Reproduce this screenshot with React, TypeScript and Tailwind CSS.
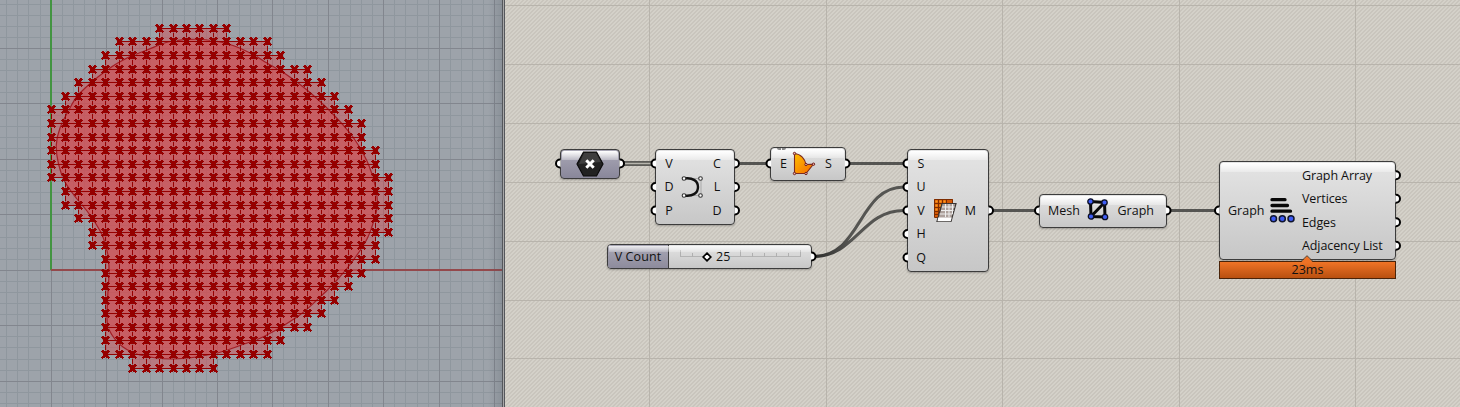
import React from "react";

type Point = [number, number];

const STEP_X = 13.48;
const STEP_Y = 13.59;
const ORIGIN: Point = [51.7, 28.4];

/* First and last occupied column of every mesh row. */
const ROWS: Point[] = [
  [8, 13], [5, 16], [4, 17], [3, 19], [2, 20], [1, 21], [0, 22], [0, 23], [0, 23],
  [0, 24], [0, 24], [0, 25], [1, 25], [1, 25], [2, 25], [3, 25], [3, 24], [4, 24],
  [4, 23], [4, 22], [4, 21], [4, 20], [4, 19], [4, 17], [4, 16], [6, 12],
];

const OUTLINE: Point[] = [
  [190, 39.3], [168, 42], [147, 50], [127, 58], [107, 70], [80, 93], [70, 108], [60, 128],
  [56.3, 145], [58.5, 164], [65, 182], [77, 199], [87, 211], [96, 224], [103, 237], [108, 255],
  [109, 273], [107.7, 297], [107.3, 323], [112, 335], [123, 347], [140, 355], [173, 359],
  [213, 354], [240, 345.5], [265, 336], [297, 317], [317, 300], [337, 280], [352, 262],
  [367, 239], [375, 217], [377.5, 203], [375, 185], [367, 161], [353, 137], [330, 111],
  [307, 90], [287, 75], [267, 63], [253, 54.5], [233, 45.5], [212, 40.5],
];

const px = (c: number) => Math.floor(ORIGIN[0] + c * STEP_X);
const py = (r: number) => Math.floor(ORIGIN[1] + r * STEP_Y);

function smooth(points: Point[]) {
  const n = points.length;
  let d = `M${points[0][0]} ${points[0][1]}`;
  for (let i = 0; i < n; i++) {
    const a = points[(i + n - 1) % n];
    const b = points[i];
    const c = points[(i + 1) % n];
    const e = points[(i + 2) % n];
    d += `C${b[0] + (c[0] - a[0]) / 6} ${b[1] + (c[1] - a[1]) / 6} ${c[0] - (e[0] - b[0]) / 6} ${c[1] - (e[1] - b[1]) / 6} ${c[0]} ${c[1]}`;
  }
  return d + "Z";
}

const outlinePath = smooth(OUTLINE);

function Viewport() {
  const minor: React.ReactNode[] = [];
  const major: React.ReactNode[] = [];
  for (let k = -5; k <= 41; k++) {
    const x = Math.round(51 + k * 11.09 - 0.4);
    const list = k % 5 === 0 ? major : minor;
    list.push(<rect key={"x" + k} x={x} y={0} width={1} height={407} fill={k % 5 === 0 ? "#82868e" : "#8f979e"} />);
  }
  for (let k = -25; k <= 13; k++) {
    const y = Math.round(270 + k * 11.09 - 0.2);
    const list = k % 5 === 0 ? major : minor;
    list.push(<rect key={"y" + k} x={0} y={y} width={503} height={1} fill={k % 5 === 0 ? "#82868e" : "#8f979e"} />);
  }

  let faces = "";
  let edges = "";
  const marks: React.ReactNode[] = [];
  ROWS.forEach(([a, b], r) => {
    edges += `M${px(a)} ${py(r)}H${px(b)}v1H${px(a)}Z`;
    if (r < ROWS.length - 1) {
      const lo = Math.max(a, ROWS[r + 1][0]);
      const hi = Math.min(b, ROWS[r + 1][1]);
      faces += `M${px(lo)} ${py(r)}H${px(hi)}V${py(r + 1)}H${px(lo)}Z`;
      for (let c = lo; c <= hi; c++) edges += `M${px(c)} ${py(r)}h1V${py(r + 1)}h-1Z`;
    }
    for (let c = a; c <= b; c++) marks.push(<use key={`${r}-${c}`} href="#mark" x={px(c)} y={py(r)} />);
  });

  return (
    <section className="h-full w-[502px] shrink-0 overflow-hidden bg-[#9da3aa]">
      <svg width="502" height="407" viewBox="0 0 502 407" className="block">
        <defs>
          <g id="mark">
            <path d="M-3 -1h1v1h-1zM3 -1h1v1h-1zM-3 2h1v1h-1zM3 1h1v1h-1zM0 -4h1v1h-1zM0 4h1v1h-1z" fill="#8e7c7d" opacity="0.8" />
            <path
              d="M-3-4h2v1h-2zM2-4h2v1h-2zM-4-3h4v1h-4zM1-3h4v1h-4zM-3-2h7v1h-7zM-2-1h5v3h-5zM-3 2h7v1h-7zM-4 3h4v1h-4zM1 3h4v1h-4zM-3 4h1v1h-1zM3 4h1v1h-1z"
              fill="#960000"
            />
          </g>
          <linearGradient id="edge">
            <stop offset="0" stopColor="#4a525c" stopOpacity="0" />
            <stop offset="1" stopColor="#4a525c" stopOpacity="0.22" />
          </linearGradient>
        </defs>
        <g shapeRendering="crispEdges">
          {minor}
          {major}
          <rect x="50" y="0" width="2" height="270" fill="#429441" />
          <rect x="51" y="269" width="451" height="2" fill="#94494c" />
        </g>
        <path d={faces} fill="#d0555b" fillOpacity="0.52" />
        <path d={outlinePath} fill="#d5494d" fillOpacity="0.55" stroke="#a31d24" strokeWidth="1.2" />
        <g shapeRendering="crispEdges">
          <path d={edges} fill="#960000" />
          {marks}
        </g>
        <rect x="488" y="0" width="14" height="407" fill="url(#edge)" />
      </svg>
    </section>
  );
}

function HexIcon() {
  return (
    <svg width="30" height="26" viewBox="0 0 30 26">
      <path d="M8.5 1h13L28 13l-6.500 12h-13L2 13z" fill="#222" stroke="#0b0b0b" strokeWidth="1.2" />
      <path d="M9 2h12l5 9-22 2z" fill="#4a4a4a" opacity=".7" />
      <path d="M11.300 9.300l7.400 7.400m0-7.400l-7.400 7.400" stroke="#fff" strokeWidth="3" />
    </svg>
  );
}

function ArcIcon() {
  return (
    <svg width="24" height="24" viewBox="0 0 24 24">
      <path d="M4 3.500h17v17H4" fill="none" stroke="#aaa" strokeWidth="1" />
      <path d="M4.500 3.500C13 2.500 18 6 18 12s-5 9.500-13.500 8.500" fill="none" stroke="#111" strokeWidth="2.400" />
      {[[4, 3.5], [20.5, 3.5], [4, 20.5], [20.500, 20.500]].map(([x, y]) => (
        <circle key={`${x}-${y}`} cx={x} cy={y} r="1.800" fill="#fff" stroke="#333" strokeWidth="1.100" />
      ))}
    </svg>
  );
}

function SurfaceIcon() {
  return (
    <svg width="24" height="26" viewBox="0 0 24 26">
      <defs>
        <linearGradient id="orange" x1="0" y1="0" x2="1" y2="1">
          <stop offset="0" stopColor="#ffbf00" />
          <stop offset="1" stopColor="#f56a00" />
        </linearGradient>
      </defs>
      <path d="M2.500 2.500C9 3 13 8 14 13.500l7.500-.3L14 22.500H2.500z" fill="url(#orange)" stroke="#7d2b20" strokeWidth="1.100" />
      {[[2.5, 2.500], [14, 13.500], [21.500, 13.200], [14, 22.500], [2.500, 22.500]].map(([x, y]) => (
        <circle key={`${x}-${y}`} cx={x} cy={y} r="1.200" fill="#f0b4a8" stroke="#6c1f1f" strokeWidth="1" />
      ))}
    </svg>
  );
}

function MeshIcon() {
  return (
    <svg width="24" height="26" viewBox="0 0 24 26">
      <path d="M1 1h19v4L14 19H1z" fill="#d55a06" />
      <path d="M1.500 1.500h18v4M1.500 1.500v18h4M5.500 1v18M9.500 1v9M13.500 1v5M1 5.500h19M1 9.500h8M1 13.500h7M1 16.500h5" fill="none" stroke="#7c2c00" strokeWidth="1" />
      {[[3, 3], [7, 3], [11, 3], [3, 7], [7, 7], [3, 11]].map(([x, y]) => (
        <rect key={`${x}-${y}`} x={x - 0.5} y={y - 0.5} width="2" height="2" fill="#ff9a1c" />
      ))}
      <path d="M9 5.500h14l-5 18H4z" fill="#ada19c" stroke="#3b3735" strokeWidth="1.200" />
      <path d="M5.200 19.500h13.500l-1 3.700H4.500z" fill="#fff" />
      <path d="M12.500 6v13M16 6v13M19.500 6v10M9 9h12.500M8 12.500h12.500M6.500 16h13" stroke="#eee" strokeWidth="1" />
    </svg>
  );
}

function GraphIcon() {
  return (
    <svg width="24" height="24" viewBox="0 0 24 24">
      <path d="M4.500 3.500l14 1 .5 14.500L5 18.500zM5 18.500L18.500 4.500" fill="none" stroke="#080808" strokeWidth="3" />
      {[[4.5, 3.5], [18.500, 4.500], [19, 19], [5, 18.500]].map(([x, y]) => (
        <circle key={`${x}-${y}`} cx={x} cy={y} r="2.700" fill="#3d5cf5" stroke="#0c0f24" strokeWidth="1.300" />
      ))}
    </svg>
  );
}

function ListIcon() {
  return (
    <svg width="28" height="28" viewBox="0 0 28 28">
      <path d="M4 3.700h13M4 9.500h15.500M4 15.200h18.500" stroke="#080808" strokeWidth="3.300" strokeLinecap="round" />
      {[5.500, 14.300, 23].map((x) => (
        <circle key={x} cx={x} cy="22.700" r="3" fill="#3d5cf5" stroke="#10152e" strokeWidth="1.500" />
      ))}
    </svg>
  );
}

const SHELL =
  "absolute flex rounded-[4px] border border-[#3c3c3c] bg-linear-to-b shadow-[0_1px_2px_rgba(0,0,0,0.25)]";
const LIGHT = "from-[#e4e4e4] to-[#c7c7c7]";

function Gloss() {
  return <span className="absolute inset-x-px top-px h-[9px] rounded-t-[2px] bg-linear-to-b from-white to-white/30" />;
}

function Ports({ labels, className }: { labels: string[]; className: string }) {
  return (
    <div className={"relative flex flex-col leading-[23.5px] " + className}>
      {labels.map((l) => (
        <span key={l}>{l}</span>
      ))}
    </div>
  );
}

/* [x, y, side]: sockets face outward from the component edge. */
const GRIPS: [number, number, number][] = [
  [560, 163.5, -1], [620, 163.5, 1],
  [655.5, 163.5, -1], [655.5, 187, -1], [655.5, 210.5, -1],
  [735, 163.5, 1], [735, 187, 1], [735, 210.5, 1],
  [770.5, 163.5, -1], [845.5, 163.5, 1], [811.5, 256.5, 1],
  [907.5, 163.5, -1], [907.5, 187, -1], [907.5, 210.5, -1], [907.5, 234, -1], [907.5, 257.5, -1],
  [989, 210.5, 1], [1039, 210.5, -1], [1166.5, 210.5, 1], [1219, 210.5, -1],
  [1396, 175.3, 1], [1396, 198.8, 1], [1396, 222.3, 1], [1396, 245.8, 1],
];

function Wires() {
  return (
    <svg width="955" height="407" viewBox="505 0 955 407" className="absolute inset-0">
      <defs>
        <linearGradient id="wire" gradientUnits="userSpaceOnUse" x1="814" y1="0" x2="850" y2="0">
          <stop offset="0" stopColor="#2c2c2a" />
          <stop offset="1" stopColor="#555552" />
        </linearGradient>
      </defs>
      <g fill="none" stroke="#555552" strokeWidth="3">
        <path d="M740 163.500h27M850 163.500h54M993 210.500h42M1171 210.500h44" />
        <path d="M814 256.500C862 256 858 187 904 187M814 256.500C856 256 862 210.500 904 210.500" stroke="url(#wire)" />
        <path d="M624 163.500h28" stroke="#5d5c58" strokeWidth="5" />
        <path d="M624 163.500h28" stroke="#b7b5ad" strokeWidth="1.400" />
      </g>
    </svg>
  );
}

function Grips() {
  return (
    <svg width="955" height="407" viewBox="505 0 955 407" className="pointer-events-none absolute inset-0">
      {GRIPS.map(([x, y, s]) => (
        <g key={`${x}-${y}`} transform={`translate(${x} ${y}) scale(${s} 1)`}>
          <path d="M-.6-3.800H0a3.800 3.800 0 0 1 0 7.600H-.6z" fill="#fff" />
          <path d="M-.3-4H0a4 4 0 0 1 0 8H-.3" fill="none" stroke="#000" strokeWidth="2" />
        </g>
      ))}
    </svg>
  );
}

function Slider() {
  return (
    <div className={SHELL + " left-[102px] top-[244px] h-[25px] w-[205px] overflow-hidden " + LIGHT}>
      <div className="flex w-[61px] items-center justify-center border-r border-[#3c3c3c] bg-linear-to-b from-[#aaa8b6] to-[#8d8b9c]">
        <span className="relative top-px tracking-[0.1px]">V Count</span>
      </div>
      <div className="relative flex flex-1 items-center pl-[33px]">
        <svg width="142" height="23" className="absolute left-0 top-0">
          <path d="M11.500 11.500H36M61 11.500H131.500" stroke="#b4b4b4" />
          <path d="M11.500 5v7M23.500 8v4M71.500 5v7M83.500 8v4M95.500 8v4M107.500 8v4M119.500 8v4M131.500 5v7" stroke="#b0b0b0" />
        </svg>
        <svg width="10" height="10" viewBox="0 0 10 10" className="relative">
          <path d="M5 1.200L8.800 5 5 8.800 1.200 5z" fill="#fff" stroke="#000" strokeWidth="1.700" />
        </svg>
        <span className="relative top-px ml-[4px]">25</span>
      </div>
      <span className="absolute inset-x-px top-px h-[6px] bg-linear-to-b from-white/80 to-white/20" />
    </div>
  );
}

function Canvas() {
  return (
    <section className="relative h-full flex-1 overflow-hidden bg-[#cfccc4] bg-[repeating-linear-gradient(135deg,#d4d1c9_0px,#d4d1c9_1.414px,#c9c5bd_1.415px,#c9c5bd_2.828px)]">
      <svg width="955" height="407" viewBox="505 0 955 407" className="absolute inset-0" shapeRendering="crispEdges">
        <path
          d="M649.500 0v407M826.500 0v407M1002.500 0v407M1179.500 0v407M1355.500 0v407M505 5.500h955M505 64.500h955M505 123.500h955M505 182.500h955M505 241.500h955M505 300.500h955M505 358.500h955"
          stroke="#b8b4ac"
        />
      </svg>
      <Wires />

      <div className={SHELL + " left-[55px] top-[149px] h-[30px] w-[60px] items-center justify-center from-[#aaa8b6] to-[#89879a]"}>
        <Gloss />
        <span className="relative"><HexIcon /></span>
      </div>

      <div className={SHELL + " left-[150px] top-[149px] h-[76px] w-[80px] items-center justify-between pl-[8px] pr-[9px] " + LIGHT}>
        <Gloss />
        <Ports labels={["V", "D", "P"]} className="w-2.5 items-center" />
        <span className="relative"><ArcIcon /></span>
        <Ports labels={["C", "L", "D"]} className="w-4 items-center" />
      </div>

      <div className={SHELL + " left-[265px] top-[147px] h-[34px] w-[76px] items-center pl-[9px] " + LIGHT}>
        <Gloss />
        <span className="absolute left-[6px] top-0 h-[2px] w-[9px] rounded-b bg-[repeating-linear-gradient(90deg,#888_0px,#888_4px,transparent_4px,transparent_5px)]" />
        <span className="relative w-[5px]">E</span>
        <span className="relative ml-[7px]"><SurfaceIcon /></span>
        <span className="relative ml-[9px]">S</span>
      </div>

      <Slider />

      <div className={SHELL + " left-[402px] top-[149px] h-[123px] w-[82px] items-center justify-between pl-[8px] pr-[12px] " + LIGHT}>
        <Gloss />
        <Ports labels={["S", "U", "V", "H", "Q"]} className="w-2.5 items-center" />
        <span className="relative"><MeshIcon /></span>
        <span className="relative pt-px">M</span>
      </div>

      <div className={SHELL + " left-[534px] top-[194px] h-[34px] w-[128px] items-center justify-between pl-[8px] pr-[12px] " + LIGHT}>
        <Gloss />
        <span className="relative">Mesh</span>
        <span className="relative -ml-[2px] -mt-0.5"><GraphIcon /></span>
        <span className="relative">Graph</span>
      </div>

      <div className={SHELL + " left-[714px] top-[161px] h-[99px] w-[177px] items-center pl-[8px] " + LIGHT}>
        <Gloss />
        <span className="relative w-[40px] pt-px">Graph</span>
        <span className="relative -mt-0.5"><ListIcon /></span>
        <Ports labels={["Graph Array", "Vertices", "Edges", "Adjacency List"]} className="ml-[6px] whitespace-nowrap tracking-[-0.1px]" />
      </div>
      <div className="absolute left-[714px] top-[261px] flex h-[18px] w-[177px] items-center justify-center border border-[#4a2308] bg-linear-to-b from-[#f07426] to-[#b9500f]">
        23ms
      </div>
      <svg width="14" height="8" viewBox="0 0 14 8" className="absolute left-[795px] top-[255px]">
        <path d="M1 7.500L7 1l6 6.500z" fill="#ee7225" />
        <path d="M1 6.500L7 .7l6 5.800" fill="none" stroke="#5a3a20" />
      </svg>
      <Grips />
    </section>
  );
}

export default function App() {
  return (
    <main className="flex h-[407px] w-[1460px] overflow-hidden font-['Open_Sans','Noto_Sans',sans-serif] text-[12.5px] leading-none text-[#111]">
      <Viewport />
      <div className="h-full w-[3px] shrink-0 border-x border-[#55575c] bg-[#a8a8a8]" />
      <Canvas />
    </main>
  );
}
